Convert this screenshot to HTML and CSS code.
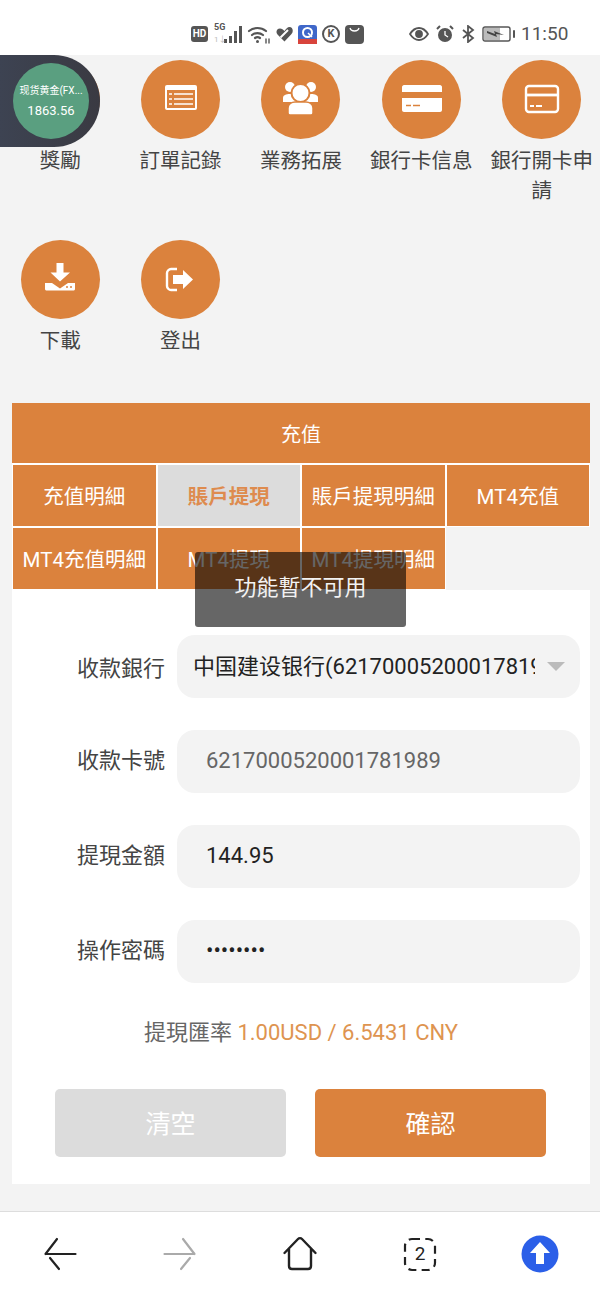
FILE: index.html
```html
<!DOCTYPE html>
<html lang="zh-Hant">
<head>
  <meta charset="UTF-8">
  <meta name="viewport" content="width=device-width, initial-scale=1.0">
  <title>賬戶提現</title>
  <link rel="stylesheet" href="styles.css">
</head>
<body>
  <div class="page">
    <div class="status-bar">
      <div class="status-left">
        <span class="hd">HD</span>
        <div class="signal">
          <span class="signal-label">5G</span>
          <span class="signal-sub">1↓</span>
          <svg width="18" height="17" viewBox="0 0 18 17"><path d="M0 13h3v4H0zM5 10h3v7H5zM10 5h3v12h-3zM15 0h3v17h-3z" fill="#555"/></svg>
        </div>
        <svg width="24" height="20" viewBox="0 0 24 20" fill="none" stroke="#555" stroke-width="2.200" stroke-linecap="round"><path d="M2 7c5-4 12-4 17 0M5 11c3-2.500 8-2.500 11 0M8 14c1.500-1 3.500-1 5 0"/><circle cx="10.500" cy="17.500" r="1.500" fill="#555" stroke="none"/><path d="M19 15v4M22 15v4" stroke-width="1.400"/></svg>
        <svg width="17" height="16" viewBox="0 0 17 16"><path d="M8.500 15.500L1.500 8.500C-.5 6.500.500 2.500 4 2.500c2 0 3 1 4.500 2.500C10 3 11.500 1 13.500 1 16.500 1 18 5 15.500 8z" fill="#555"/><path d="M4.500 11.500L12 4" stroke="#fff" stroke-width="2"/></svg>
        <svg width="19" height="19" viewBox="0 0 19 19"><rect width="19" height="19" rx="3" fill="#3f67c9"/><rect y="14" width="19" height="5" fill="#d8443c"/><circle cx="9.500" cy="7.500" r="4.500" fill="none" stroke="#fff" stroke-width="2"/><path d="M10 8l4 4" stroke="#fff" stroke-width="1.500"/></svg>
        <span class="k-icon">K</span>
        <svg width="19" height="19" viewBox="0 0 19 19"><rect width="19" height="19" rx="4" fill="#555"/><path d="M5 3c1 4 8 4 9 0" fill="none" stroke="#fff" stroke-width="1.300"/></svg>
      </div>
      <div class="status-right">
        <svg width="20" height="14" viewBox="0 0 20 14" fill="none" stroke="#555" stroke-width="1.800"><path d="M1 7c5-8 13-8 18 0-5 8-13 8-18 0z"/><circle cx="10" cy="7" r="3" fill="#555"/></svg>
        <svg width="18" height="18" viewBox="0 0 18 18"><circle cx="9" cy="10" r="7" fill="#555"/><path d="M9 6v4l3 2" fill="none" stroke="#fff" stroke-width="1.300"/><path d="M1 4l3-3M17 4l-3-3" stroke="#555" stroke-width="2"/></svg>
        <svg width="14" height="18" viewBox="0 0 14 18" fill="none" stroke="#555" stroke-width="1.800"><path d="M2 5l10 8-5 4V1l5 4L2 13"/></svg>
        <svg width="33" height="16" viewBox="0 0 33 16"><rect x="1" y="1" width="27" height="14" rx="2" fill="#fff" stroke="#555" stroke-width="1.400"/><rect x="2" y="2" width="16" height="12" fill="#bbb"/><path d="M5 5l8 3-1-3 10 4-8-1 1 3-10-4z" fill="#444"/><rect x="31" y="4" width="2" height="8" rx="1" fill="#555"/></svg>
        <span class="clock">11:50</span>
      </div>
    </div>

    <div class="content">
      <div class="menu-grid">
        <div class="menu-item">
          <div class="menu-circle"></div>
          <div class="menu-label">獎勵</div>
        </div>
        <div class="menu-item">
          <div class="menu-circle">
            <svg viewBox="0 0 79 79"><rect x="24" y="25" width="32" height="25" rx="2" fill="#fff"/><rect x="26" y="30" width="28" height="18" fill="#db823d"/><path d="M28 34h3M33 34h19M28 39h3M33 39h19M28 44h3M33 44h19" stroke="#fff" stroke-width="1.700"/></svg>
          </div>
          <div class="menu-label">訂單記錄</div>
        </div>
        <div class="menu-item">
          <div class="menu-circle">
            <svg viewBox="0 0 79 79" fill="#fff"><circle cx="29" cy="27" r="5"/><circle cx="50" cy="27" r="5"/><path d="M22 42v-4c0-3 3-4 7-4h21c4 0 7 1 7 4v4z"/><circle cx="39.500" cy="33" r="9" stroke="#db823d" stroke-width="2"/><path d="M27 53v-5c0-4 4-6 7-6h11c3 0 7 2 7 6v5c0 1-1 2-2 2H29c-1 0-2-1-2-2z" stroke="#db823d" stroke-width="1.500"/></svg>
          </div>
          <div class="menu-label">業務拓展</div>
        </div>
        <div class="menu-item">
          <div class="menu-circle">
            <svg viewBox="0 0 79 79" fill="#fff"><path d="M20 32v-5c0-1 1-2 2-2h36c1 0 2 1 2 2v5z"/><path d="M20 38h40v12c0 1-1 2-2 2H22c-1 0-2-1-2-2z"/><path d="M24 45.500h5M31 45.500h7" stroke="#db823d" stroke-width="1.600"/></svg>
          </div>
          <div class="menu-label">銀行卡信息</div>
        </div>
        <div class="menu-item">
          <div class="menu-circle">
            <svg viewBox="0 0 79 79" fill="none" stroke="#fff"><rect x="24" y="26" width="32" height="26" rx="3" stroke-width="2.400"/><path d="M24 35h32" stroke-width="2.800"/><path d="M28 46h4M34 46h6" stroke-width="1.800"/></svg>
          </div>
          <div class="menu-label">銀行開卡申請</div>
        </div>
        <div class="menu-item">
          <div class="menu-circle">
            <svg viewBox="0 0 79 79" fill="#fff"><path d="M35.500 23h7v9.500h6.500L39 41.500 29.500 32.500h6z"/><path d="M24 43h7l8 5.500 8-5.500h7v6c0 1-1 1.500-2 1.500H26c-1 0-2-.5-2-1.500z"/><circle cx="46" cy="47" r="1" fill="#db823d"/><circle cx="50" cy="47" r="1" fill="#db823d"/></svg>
          </div>
          <div class="menu-label">下載</div>
        </div>
        <div class="menu-item">
          <div class="menu-circle">
            <svg viewBox="0 0 79 79" fill="#fff"><path d="M36 29h-6c-2 0-4 2-4 4v13c0 2 2 4 4 4h6" fill="none" stroke="#fff" stroke-width="2.400"/><path d="M32 35h10v-5l10 9.500L42 49v-5H32z"/></svg>
          </div>
          <div class="menu-label">登出</div>
        </div>
      </div>

      <div class="tabs">
        <div class="tab-main">充值</div>
        <div class="tab-grid">
          <div class="tab">充值明細</div>
          <div class="tab active">賬戶提現</div>
          <div class="tab">賬戶提現明細</div>
          <div class="tab">MT4充值</div>
          <div class="tab">MT4充值明細</div>
          <div class="tab">MT4提現</div>
          <div class="tab">MT4提現明細</div>
        </div>
      </div>

      <div class="panel">
        <div class="form-row">
          <div class="form-label first">收款銀行</div>
          <div class="field select">
            <span class="select-text" lang="zh-Hans">中国建设银行(6217000520001781989)</span>
            <span class="select-arrow"></span>
          </div>
        </div>
        <div class="form-row">
          <div class="form-label">收款卡號</div>
          <div class="field disabled">6217000520001781989</div>
        </div>
        <div class="form-row">
          <div class="form-label">提現金額</div>
          <div class="field">144.95</div>
        </div>
        <div class="form-row">
          <div class="form-label">操作密碼</div>
          <div class="field password">••••••••</div>
        </div>
        <div class="rate">提現匯率 <span class="rate-value">1.00USD / 6.5431 CNY</span></div>
        <div class="buttons">
          <div class="btn btn-clear">清空</div>
          <div class="btn btn-ok">確認</div>
        </div>
      </div>
    </div>

    <div class="bottom-nav">
      <div class="nav-item">
        <svg width="40" height="40" viewBox="0 0 40 40" fill="none" stroke="#222" stroke-width="2.200" stroke-linecap="round"><path d="M5.500 20h30M17 5L5.500 20M10 24l9 11"/></svg>
      </div>
      <div class="nav-item">
        <svg width="40" height="40" viewBox="0 0 40 40" fill="none" stroke="#aaa" stroke-width="2.200" stroke-linecap="round"><path d="M34.500 20h-30M23 5l11.500 15M30 24l-9 11"/></svg>
      </div>
      <div class="nav-item">
        <svg width="40" height="40" viewBox="0 0 40 40" fill="none" stroke="#222" stroke-width="2.400" stroke-linecap="round" stroke-linejoin="round"><path d="M4.500 19L18 5c1-1 3-1 4 0l13.500 14M9 15v17c0 2 1 3 3 3h16c2 0 3-1 3-3V15"/></svg>
      </div>
      <div class="nav-item tabs-count">
        <svg width="40" height="40" viewBox="0 0 40 40" fill="none" stroke="#222" stroke-width="2.200"><rect x="5" y="5" width="30" height="31" rx="7" stroke-dasharray="8 5.300"/></svg>
        <span class="tabs-number">2</span>
      </div>
      <div class="nav-item">
        <svg width="40" height="40" viewBox="0 0 40 40"><circle cx="20" cy="20" r="18.500" fill="#2b5fe8"/><path d="M20 8l10 11h-6v11h-8V19h-6z" fill="#fff"/></svg>
      </div>
    </div>

    <div class="float-ball">
      <div class="ball-inner">
        <div class="ball-name" lang="zh-Hans">现货黄金(FX...</div>
        <div class="ball-price">1863.56</div>
      </div>
    </div>

    <div class="toast">功能暫不可用</div>
  </div>
</body>
</html>
```

FILE: styles.css
```css
* {
  margin: 0;
  padding: 0;
  box-sizing: border-box;
}

body {
  font-family: Roboto, "Noto Sans CJK TC", sans-serif;
  background: #f3f3f3;
  color: #444;
}

.page {
  position: relative;
  width: 600px;
  height: 1299px;
  overflow: hidden;
  display: flex;
  flex-direction: column;
}

/* status bar */
.status-bar {
  height: 55px;
  flex-shrink: 0;
  background: #fff;
  display: flex;
  align-items: center;
  padding: 13px 0 0 191px;
  color: #555;
}

.status-left,
.status-right {
  display: flex;
  align-items: center;
}

.status-left {
  gap: 5px;
}

.status-right {
  gap: 7px;
  margin-left: 45px;
}

.hd {
  width: 17px;
  height: 16px;
  background: #555;
  color: #fff;
  border-radius: 3px;
  font-size: 10px;
  font-weight: 700;
  line-height: 16px;
  text-align: center;
}

.signal {
  position: relative;
  width: 29px;
  height: 18px;
  display: flex;
  justify-content: flex-end;
  align-items: flex-end;
}

.signal-label {
  position: absolute;
  left: 1px;
  top: -3px;
  font-size: 9px;
  line-height: 11px;
  font-weight: 700;
}

.signal-sub {
  position: absolute;
  left: 1px;
  bottom: -1px;
  font-size: 8px;
  line-height: 9px;
  color: #bbb;
}

.k-icon {
  width: 18px;
  height: 18px;
  border: 2px solid #555;
  border-radius: 50%;
  font-size: 11px;
  font-weight: 700;
  line-height: 14px;
  text-align: center;
}

.clock {
  font-size: 19px;
  line-height: 24px;
  margin-left: -1px;
}

/* icon menu */
.menu-grid {
  display: grid;
  grid-template-columns: repeat(5, 120.4px);
  row-gap: 34px;
  padding-top: 5px;
}

.menu-item {
  display: flex;
  flex-direction: column;
  align-items: center;
  text-align: center;
}

.menu-circle {
  width: 79px;
  height: 79px;
  border-radius: 50%;
  background: #db823d;
}

.menu-circle svg {
  display: block;
  width: 79px;
  height: 79px;
}

.menu-label {
  margin-top: 7px;
  max-width: 110px;
  font-size: 20.5px;
  line-height: 30px;
  color: #444;
}

/* tabs */
.tabs {
  margin: 47px 10px 0 12px;
}

.tab-main {
  height: 61px;
  background: #db823d;
  color: #fff;
  font-size: 20px;
  line-height: 64px;
  text-align: center;
  border-bottom: 1px solid #fff;
}

.tab-grid {
  display: grid;
  grid-template-columns: repeat(4, 144.5px);
}

.tab {
  height: 63px;
  background: #db823d;
  border: 1px solid #fff;
  color: #fff;
  font-size: 20.5px;
  line-height: 64px;
  text-align: center;
  white-space: nowrap;
}

.tab.active {
  background: #dcdcdc;
  color: #de8b4e;
  font-weight: 700;
}

/* form */
.panel {
  margin: 0 10px 0 12px;
  height: 594px;
  background: #fff;
  padding: 45px 10px 0 0;
  display: flex;
  flex-direction: column;
  gap: 32px;
}

.form-row {
  display: flex;
  align-items: center;
  gap: 12px;
}

.form-label {
  width: 153px;
  padding-bottom: 7px;
  font-size: 22px;
  text-align: right;
  color: #444;
}

.form-label.first {
  padding-bottom: 2px;
}

.field {
  flex: 1;
  min-width: 0;
  height: 63px;
  background: #f3f3f3;
  border-radius: 18px;
  padding-left: 29px;
  font-size: 22px;
  line-height: 61px;
  color: #222;
}

.field.disabled {
  color: #666;
}

.select {
  display: flex;
  align-items: center;
  padding: 0 15px 0 16px;
}

.select-text {
  flex: 1;
  min-width: 0;
  overflow: hidden;
  white-space: nowrap;
}

.select-arrow {
  width: 0;
  height: 0;
  margin-left: 12px;
  border-left: 9px solid transparent;
  border-right: 9px solid transparent;
  border-top: 9px solid #bbb;
}

.rate {
  margin: 0 -10px 0 0;
  font-size: 22px;
  line-height: 36px;
  text-align: center;
  color: #666;
}

.rate-value {
  color: #de9450;
}

.buttons {
  margin-top: 6px;
  padding-left: 43px;
  display: flex;
  gap: 29px;
}

.btn {
  width: 231px;
  height: 68px;
  border-radius: 5px;
  font-size: 25px;
  line-height: 72px;
  text-align: center;
  color: #fff;
}

.btn-clear {
  background: #dcdcdc;
}

.btn-ok {
  background: #db823d;
}

/* browser bar */
.bottom-nav {
  margin-top: 27px;
  flex: 1;
  background: #fff;
  border-top: 1px solid #ddd;
  display: flex;
  align-items: center;
  padding-bottom: 3px;
}

.nav-item {
  width: 120px;
  display: flex;
  justify-content: center;
  position: relative;
}

.tabs-number {
  position: absolute;
  left: 0;
  right: 0;
  top: 8px;
  font-size: 19px;
  line-height: 24px;
  text-align: center;
  color: #222;
}

/* overlays */
.float-ball {
  position: absolute;
  left: 0;
  top: 55px;
  width: 100px;
  height: 92px;
  background: linear-gradient(90deg, #3d4352, #3a3a42);
  border-radius: 0 46px 46px 0;
}

.ball-inner {
  position: absolute;
  left: 13px;
  top: 8px;
  width: 76px;
  height: 76px;
  border-radius: 50%;
  background: #5a9f80;
  color: #fff;
  text-align: center;
}

.ball-name {
  margin-top: 20px;
  font-size: 10px;
  line-height: 16px;
  white-space: nowrap;
}

.ball-price {
  margin-top: 3px;
  font-size: 13px;
  line-height: 18px;
}

.toast {
  position: absolute;
  left: 195px;
  top: 552px;
  width: 211px;
  height: 75px;
  background: rgba(0, 0, 0, 0.6);
  border-radius: 3px;
  color: #f2f2f2;
  font-size: 22px;
  line-height: 72px;
  text-align: center;
}
```
